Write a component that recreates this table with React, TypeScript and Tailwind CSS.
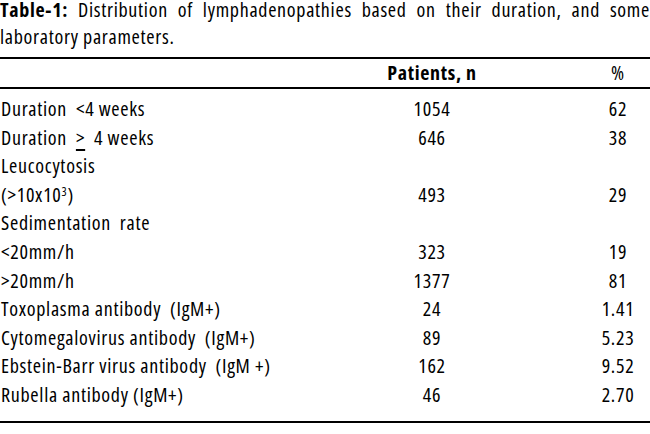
const rows: { label: React.ReactNode; n?: string; pct?: string }[] = [
  { label: "Duration  <4 weeks", n: "1054", pct: "62" },
  {
    label: (
      <>
        Duration  <span className="underline decoration-[1.5px] underline-offset-[4px]">&gt;</span>  4 weeks
      </>
    ),
    n: "646",
    pct: "38",
  },
  { label: "Leucocytosis" },
  {
    label: (
      <>
        (&gt;10x10<sup className="text-[12px]">3</sup>)
      </>
    ),
    n: "493",
    pct: "29",
  },
  { label: "Sedimentation  rate" },
  { label: "<20mm/h", n: "323", pct: "19" },
  { label: ">20mm/h", n: "1377", pct: "81" },
  { label: "Toxoplasma antibody  (IgM+)", n: "24", pct: "1.41" },
  { label: "Cytomegalovirus antibody  (IgM+)", n: "89", pct: "5.23" },
  { label: "Ebstein-Barr virus antibody  (IgM +)", n: "162", pct: "9.52" },
  { label: "Rubella antibody (IgM+)", n: "46", pct: "2.70" },
];

export default function App() {
  return (
    <div className="w-[650px] h-[434px] bg-white text-black text-[20px] tracking-[0.7px] font-['Open_Sans',sans-serif] font-stretch-condensed overflow-hidden">
      <div className="h-[57px]">
        <p className="leading-[20px] text-justify [text-align-last:justify]">
          <span className="font-bold">Table-1:</span> Distribution of lymphadenopathies based on their duration, and some
        </p>
        <p className="leading-[27px] mt-[3px]">laboratory parameters.</p>
      </div>

      <table className="w-full border-collapse">
        <colgroup>
          <col className="w-[360px]" />
          <col className="w-[144px]" />
          <col />
        </colgroup>
        <thead>
          <tr className="border-t-2 border-b-2 border-black h-[30px] leading-[28px]">
            <th />
            <th className="font-bold text-center">Patients, n</th>
            <th className="font-normal text-center pl-[82px]">%</th>
          </tr>
        </thead>
        <tbody className="border-b-2 border-black">
          <tr className="h-[7px]">
            <td colSpan={3} />
          </tr>
          {rows.map((r, i) => (
            <tr key={i} className="h-[28.6px] leading-[28.6px]">
              <td className="whitespace-pre pl-[1px]">{r.label}</td>
              <td className="text-center">{r.n}</td>
              <td className="text-center pl-[82px]">{r.pct}</td>
            </tr>
          ))}
          <tr className="h-[12px]">
            <td colSpan={3} />
          </tr>
        </tbody>
      </table>
    </div>
  );
}
